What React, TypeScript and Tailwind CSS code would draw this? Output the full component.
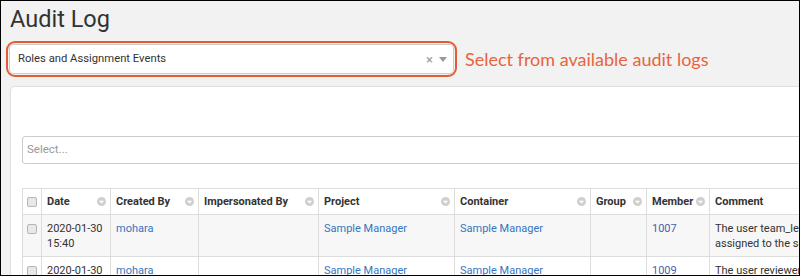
import React from "react";

type Row = {
  date: string;
  time: string;
  createdBy: string;
  project: string;
  container: string;
  member: string;
  comment: [string, string];
};

const rows: Row[] = [
  {
    date: "2020-01-30",
    time: "15:40",
    createdBy: "mohara",
    project: "Sample Manager",
    container: "Sample Manager",
    member: "1007",
    comment: ["The user team_lead@labkey.com was", "assigned to the security role Editor."],
  },
  {
    date: "2020-01-30",
    time: "15:40",
    createdBy: "mohara",
    project: "Sample Manager",
    container: "Sample Manager",
    member: "1009",
    comment: ["The user reviewer@labkey.com was", "assigned to the security role Reader."],
  },
];

const columns = [
  { label: "Date", width: "w-[69px]" },
  { label: "Created By", width: "w-[88px]" },
  { label: "Impersonated By", width: "w-[120px]" },
  { label: "Project", width: "w-[136px]" },
  { label: "Container", width: "w-[136px]" },
  { label: "Group", width: "w-[56px]" },
  { label: "Member", width: "w-[63px]" },
];

const SortIcon = () => (
  <svg width="9" height="9" viewBox="0 0 9 9" className="shrink-0">
    <circle cx="4.5" cy="4.5" r="4.5" fill="#cfcfcf" />
    <path d="M2.6 3.6 L4.5 5.5 L6.4 3.6" stroke="#fff" strokeWidth="1.3" fill="none" />
  </svg>
);

const Checkbox = () => (
  <span className="block w-[10px] h-[10px] rounded-[2px] border border-[#b5b5b5] bg-[#e8e8e8]" />
);

const App = () => {
  return (
    <div className="w-[800px] h-[276px] border border-black bg-[#f2f2f2] overflow-hidden font-['Roboto',sans-serif] text-[#333]">
      <div className="h-[40px] pl-[9px] pt-[7px]">
        <h1 className="text-[23.5px] leading-[23px] font-normal text-[#333]">Audit Log</h1>
      </div>

      <div className="flex items-center pl-[5px]">
        <div className="w-[451px] h-[36px] border-2 border-[#e35b32] rounded-[9px] p-px">
          <div className="flex items-center h-[30px] bg-white border border-[#cccccc] rounded-[4px] pl-[8px] pr-[6px]">
            <span className="flex-1 text-[11.25px] text-[#333]">Roles and Assignment Events</span>
            <span className="text-[#999] text-[13px] leading-none mr-[6px]">×</span>
            <span className="w-0 h-0 border-l-[4px] border-r-[4px] border-t-[5px] border-l-transparent border-r-transparent border-t-[#999]" />
          </div>
        </div>
        <span className="ml-[8px] font-['Lato',sans-serif] text-[18px] text-[#e8643c]">
          Select from available audit logs
        </span>
      </div>

      <div className="mt-[9px] ml-[9px] w-[1100px] bg-white border border-[#dddddd] rounded-tl-[4px] pl-[11px] pt-[49px]">
        <div className="h-[28px] border border-[#cccccc] rounded-[3px] flex items-center pl-[4px] text-[11.5px] text-[#999]">
          Select...
        </div>

        <table className="mt-[24px] border-collapse text-[11px] leading-[15px]">
          <thead>
            <tr className="bg-white">
              <th className="w-[19px] border border-[#dddddd] align-middle">
                <div className="flex justify-center">
                  <Checkbox />
                </div>
              </th>
              {columns.map((c) => (
                <th key={c.label} className={`${c.width} border border-[#dddddd] pl-[5px] pr-[4px] py-[5px] text-left font-bold`}>
                  <div className="flex items-center justify-between">
                    <span className="whitespace-nowrap">{c.label}</span>
                    <SortIcon />
                  </div>
                </th>
              ))}
              <th className="w-[300px] border border-[#dddddd] pl-[5px] py-[5px] text-left font-bold">Comment</th>
            </tr>
          </thead>
          <tbody>
            {rows.map((r, i) => (
              <tr key={r.member} className={i % 2 === 0 ? "bg-[#f7f7f7]" : "bg-white"}>
                <td className="border border-[#dddddd] align-top pt-[9px]">
                  <div className="flex justify-center">
                    <Checkbox />
                  </div>
                </td>
                <td className="border border-[#dddddd] align-top pl-[5px] pt-[6px] pb-[5px]">
                  {r.date}
                  <br />
                  {r.time}
                </td>
                <td className="border border-[#dddddd] align-top pl-[5px] pt-[6px] pb-[5px] text-[#3575c0]">{r.createdBy}</td>
                <td className="border border-[#dddddd] align-top pl-[5px] pt-[6px] pb-[5px]"></td>
                <td className="border border-[#dddddd] align-top pl-[5px] pt-[6px] pb-[5px] text-[#3575c0]">{r.project}</td>
                <td className="border border-[#dddddd] align-top pl-[5px] pt-[6px] pb-[5px] text-[#3575c0]">{r.container}</td>
                <td className="border border-[#dddddd] align-top pl-[5px] pt-[6px] pb-[5px]"></td>
                <td className="border border-[#dddddd] align-top pl-[5px] pt-[6px] pb-[5px] text-[#4d5db0]">{r.member}</td>
                <td className="border border-[#dddddd] align-top pl-[5px] pt-[6px] pb-[5px] whitespace-nowrap">
                  {r.comment[0]}
                  <br />
                  {r.comment[1]}
                </td>
              </tr>
            ))}
          </tbody>
        </table>
      </div>
    </div>
  );
};

export default App;
